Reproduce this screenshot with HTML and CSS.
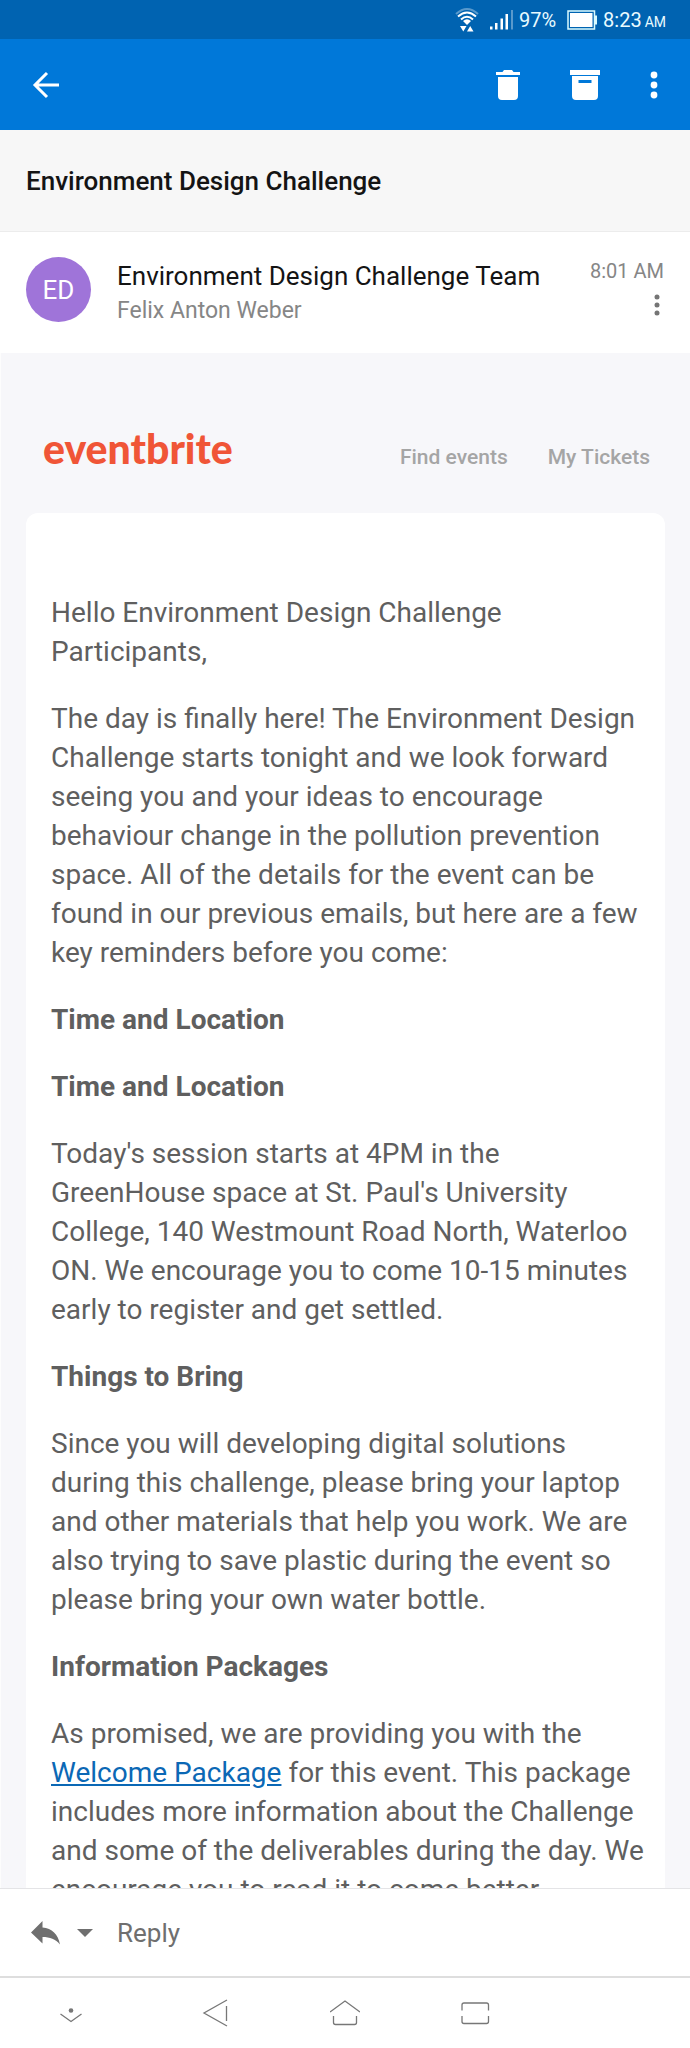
FILE: index.html
```html
<!DOCTYPE html>
<html lang="en">
<head>
<meta charset="utf-8">
<meta name="viewport" content="width=device-width, initial-scale=1">
<title>Environment Design Challenge</title>
<link rel="stylesheet" href="styles.css">
</head>
<body>
<div class="app">
  <div class="status">
    <svg class="wifi" width="24" height="26" viewBox="0 0 24 26" fill="none" stroke="#fff" stroke-width="2">
      <path d="M1 7Q12-3 23 7" opacity=".35"/>
      <path d="M3 9.500Q12 1.500 21 9.500M6 12.500Q12 7 18 12.500"/>
      <path d="M8 14Q12 10.500 16 14L12 18Z" fill="#fff" stroke="none"/>
      <path d="M5 19H11.500L8.300 24.500ZM12 24.500H18.500L15.200 19Z" fill="#fff" stroke="none"/>
    </svg>
    <svg class="signal" width="24" height="20" viewBox="0 0 24 20" fill="#fff">
      <path d="M0 16.500H2.500V19.500H0ZM5 13H7.500V19.500H5ZM10.500 8.500H13V19.500H10.500ZM15.500 4H18V19.500H15.500Z"/>
      <path d="M21 0H23V19.500H21Z" opacity=".35"/>
    </svg>
    <span class="percent">97%</span>
    <svg class="battery" width="31" height="20" viewBox="0 0 31 20">
      <rect x="1" y="1" width="26.500" height="18" fill="none" stroke="#d9fbff" stroke-width="1.500"/>
      <rect x="3" y="3" width="22.500" height="14" fill="#fff"/>
      <path d="M28 5.500H30V14.500H28Z" fill="#d9fbff"/>
    </svg>
    <span>8:23</span>
    <span class="ampm">AM</span>
  </div>
  <header class="appbar">
    <button class="icon-btn" aria-label="Back">
      <svg width="28" height="28" viewBox="0 0 28 28" fill="none" stroke="#fff" stroke-width="3"><path d="M27 14H3M15 2L3 14L15 26"/></svg>
    </button>
    <div class="actions">
      <button class="icon-btn" aria-label="Delete">
        <svg width="24" height="30" viewBox="0 0 24 30" fill="#fff"><path d="M0 2H6.500L8 0H16L17.500 2H24V5H0ZM2 7H22V26Q22 30 18 30H6Q2 30 2 26Z"/></svg>
      </button>
      <button class="icon-btn" aria-label="Archive">
        <svg width="30" height="30" viewBox="0 0 30 30" fill="#fff"><path d="M0 0H30V5H0Z"/><path fill-rule="evenodd" d="M2 6H28V26Q28 30 24 30H6Q2 30 2 26ZM8.500 10V13H21.500V10Z"/></svg>
      </button>
      <button class="icon-btn" aria-label="More options">
        <svg width="8" height="28" viewBox="0 0 8 28" fill="#fff"><circle cx="4" cy="4" r="3.400"/><circle cx="4" cy="14" r="3.400"/><circle cx="4" cy="24" r="3.400"/></svg>
      </button>
    </div>
  </header>
  <h1 class="subject">Environment Design Challenge</h1>
  <section class="sender">
    <div class="avatar">ED</div>
    <div class="who">
      <div class="from">Environment Design Challenge Team</div>
      <div class="to">Felix Anton Weber</div>
    </div>
    <div class="meta">
      <time>8:01 AM</time>
      <button class="icon-btn" aria-label="Message options">
        <svg width="6" height="22" viewBox="0 0 6 22" fill="#757575"><circle cx="3" cy="3" r="2.500"/><circle cx="3" cy="11" r="2.500"/><circle cx="3" cy="19" r="2.500"/></svg>
      </button>
    </div>
  </section>
  <main class="mail">
    <div class="brand-row">
      <a class="logo" href="#">eventbrite</a>
      <nav class="links"><a href="#">Find events</a><a href="#">My Tickets</a></nav>
    </div>
    <article class="card">
      <p>Hello Environment Design Challenge Participants,</p>
      <p>The day is finally here! The Environment Design Challenge starts tonight and we look forward seeing you and your ideas to encourage behaviour change in the pollution prevention space. All of the details for the event can be found in our previous emails, but here are a few key reminders before you come:</p>
      <h2>Time and Location</h2>
      <h2>Time and Location</h2>
      <p>Today's session starts at 4PM in the GreenHouse space at St. Paul's University College, 140 Westmount Road North, Waterloo ON. We encourage you to come 10-15 minutes early to register and get settled.</p>
      <h2>Things to Bring</h2>
      <p>Since you will developing digital solutions during this challenge, please bring your laptop and other materials that help you work. We are also trying to save plastic during the event so please bring your own water bottle.</p>
      <h2>Information Packages</h2>
      <p>As promised, we are providing you with the <a href="#">Welcome Package</a> for this event. This package includes more information about the Challenge and some of the deliverables during the day. We encourage you to read it to come better</p>
    </article>
  </main>
  <footer class="reply">
    <button class="icon-btn" aria-label="Reply to sender">
      <svg width="30" height="24" viewBox="0 0 30 24" fill="#6f6f6f"><path d="M0 11.500L11.500 0V6.500C21 7.500 27 13 29 23.500C24.500 18 19 16 11.500 16V22.500Z"/></svg>
    </button>
    <button class="icon-btn" aria-label="Reply options">
      <svg width="16" height="8" viewBox="0 0 16 8" fill="#6f6f6f"><path d="M0 0H16L8 8Z"/></svg>
    </button>
    <button class="reply-btn">Reply</button>
  </footer>
  <nav class="softkeys">
    <button class="icon-btn hide-key" aria-label="Hide navigation bar">
      <svg width="30" height="30" viewBox="0 0 30 30" fill="none" stroke="#777" stroke-width="1.300"><path d="M4.500 16L15 23.500L25.500 16"/><circle cx="15" cy="12.500" r="2.300" fill="#777" stroke="none"/></svg>
    </button>
    <button class="icon-btn" aria-label="Back key">
      <svg width="30" height="30" viewBox="0 0 30 30" fill="none" stroke="#777" stroke-width="1.300"><path d="M27 2L4 15L27 28M26.500 8V23"/></svg>
    </button>
    <button class="icon-btn" aria-label="Home key">
      <svg width="30" height="30" viewBox="0 0 30 30" fill="none" stroke="#777" stroke-width="1.300"><path d="M0 14L15 3L30 14M3.500 18V24.500Q3.500 26.500 5.500 26.500H24.500Q26.500 26.500 26.500 24.500V18"/></svg>
    </button>
    <button class="icon-btn" aria-label="Recent apps key">
      <svg width="30" height="30" viewBox="0 0 30 30" fill="none" stroke="#777" stroke-width="1.300"><path d="M2 12.500V7Q2 5 4 5H26.500Q28.500 5 28.500 7V12.500M2 18V23.500Q2 25.500 4 25.500H26.500Q28.500 25.500 28.500 23.500V18"/></svg>
    </button>
  </nav>
</div>
</body>
</html>
```
FILE: styles.css
```css
* { box-sizing: border-box; }
body { margin: 0; font-family: Roboto, "Liberation Sans", sans-serif; color: #141414; background: #fff; }
svg { display: block; }
h1, h2, p { margin: 0; }
button { border: 0; padding: 0; background: none; font: inherit; color: inherit; }
.app { display: flex; flex-direction: column; height: 100vh; }

.status { display: flex; flex: none; align-items: center; justify-content: flex-end; height: 39px; padding: 1px 24px 0 0; background: #0063b1; color: #e9fbff; font-size: 20px; }
.signal { margin-left: 11px; }
.percent { margin-left: 5px; }
.battery { margin: 0 5px 0 11px; }
.ampm { margin: 4px 0 0 3px; font-size: 14px; }

.appbar { display: flex; flex: none; align-items: center; justify-content: space-between; height: 91px; padding: 0 32px; background: #0078d9; }
.actions { display: flex; align-items: center; gap: 50px; }

.subject { flex: none; padding: 35px 26px 34px; border-bottom: 1px solid #ececec; background: #f7f7f7; font-size: 26px; line-height: 32px; font-weight: 500; }

.sender { display: flex; flex: none; align-items: flex-start; padding: 25px 26px 25px; }
.avatar { display: flex; align-items: center; justify-content: center; width: 65px; height: 65px; border-radius: 50%; background: #9f74d9; color: #fff; font-size: 26px; }
.who { flex: 1; margin-left: 26px; padding-top: 1px; }
.from { font-size: 26px; line-height: 36px; }
.to { color: #868686; font-size: 23px; line-height: 34px; }
.meta { display: flex; flex-direction: column; align-items: flex-end; gap: 9px; color: #868686; font-size: 20px; line-height: 28px; }
.meta .icon-btn { margin-right: 4px; }

.mail { flex: 1; min-height: 0; overflow: hidden; padding: 0 25px; border-left: 1px solid #fdfdfd; background: #f7f7fa; }
.brand-row { display: flex; align-items: center; justify-content: space-between; height: 160px; padding: 36px 15px 0 17px; }
.logo { padding-bottom: 4px; color: #f05537; font-family: Lato, sans-serif; font-size: 41px; line-height: 48px; font-weight: 900; text-decoration: none; }
.links { display: flex; gap: 40px; padding-top: 12px; }
.links a { color: #a5a5a5; font-size: 21px; line-height: 28px; font-weight: 500; text-decoration: none; }
.card { display: flex; flex-direction: column; gap: 28px; padding: 80px 16px 40px 25px; border-radius: 12px; background: #fff; color: #5f5f5f; font-size: 28px; line-height: 39px; }
.card h2 { font-size: 28px; font-weight: 700; }
.card a { color: #0b68b5; }

.reply { display: flex; flex: none; align-items: center; height: 88px; padding-left: 31px; border-top: 1px solid #e4e4e6; color: #6f6f6f; font-size: 26px; }
.reply .icon-btn { margin-right: 16px; }
.reply-btn { margin-left: 8px; }
.softkeys { display: flex; flex: none; align-items: center; gap: 100px; height: 72px; padding-left: 56px; border-top: 2px solid #dedede; }
.hide-key { margin-right: 14px; }
```
